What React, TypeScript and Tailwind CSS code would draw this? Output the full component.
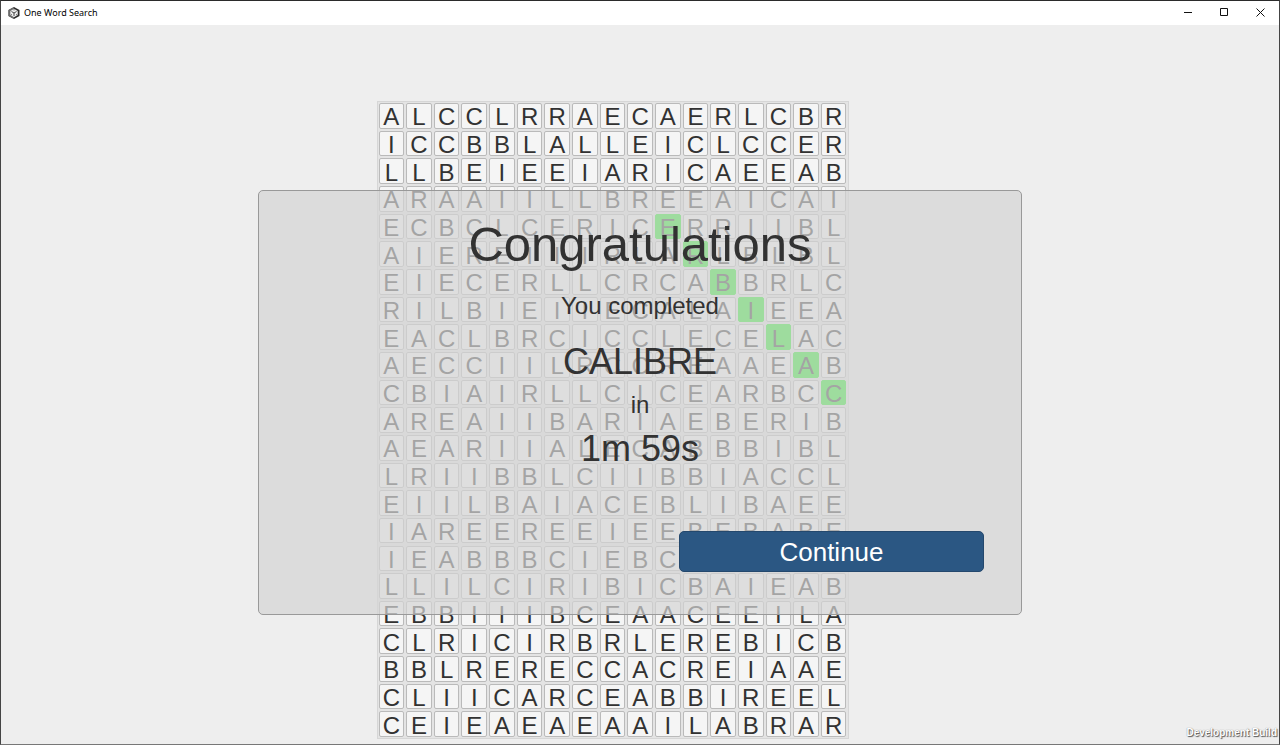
const rows: string[] = [
  "ALCCLRRAECAERLCBR",
  "ICCBBLALLEICLCCER",
  "LLBEIEEIARICAEEAB",
  "ARAAIILLBREEAICAI",
  "ECBCLCERICERRIIBL",
  "AIEREIIIRLARLBLBL",
  "EIECERLLCRCABBRLC",
  "RILBIEIIECALAIEEA",
  "EACLBRCICCLECELAC",
  "AECCIILRCCREAAEAB",
  "CBIAIRLLCICEARBCC",
  "AREAIIBARIAEBERIB",
  "AEARIIALECABBBIBL",
  "LRIIBBLCIIBBIACCL",
  "EIILBAIACEBLIBAEE",
  "IAREEREEIEEBEBABE",
  "IEABBBCIEBC      ",
  "LLILCIRIBICBAIEAB",
  "EBBIIIBCEAACEEILA",
  "CLRICIRBRLEREBICB",
  "BBLRERECCACREIAAE",
  "CLIICARCEABBIREEL",
  "CEIEAEAEAAILABRAR",
];

// The found word runs diagonally, from row 4 / column 10 to row 10 / column 16.
const isFound = (row: number, col: number) => row >= 4 && row <= 10 && col === row + 6;

function AppIcon() {
  return (
    <svg viewBox="0 0 24 24" className="size-3" aria-hidden="true">
      <path d="M12 0 23 6v12L12 24 1 18V6z" fill="#2a2a2a" />
      <path d="M1 6 12 0v3.500L4.500 8v8L12 20.500V24L1 18z" fill="#6a6a6a" />
      <path d="M12 3.500 19.500 8v8L12 20.500 4.500 16V8z" fill="#ededed" />
      <path d="M12 12v6M12 12 7 9M12 12l5-3" stroke="#333" strokeWidth="1.800" />
      <path d="M12 4v3M5.500 16 8 14.500M18.500 16 16 14.500" stroke="#555" strokeWidth="1.500" />
    </svg>
  );
}

function TitleBar() {
  return (
    <header className="flex h-6 items-center bg-white pl-[7px]">
      <AppIcon />
      <h1 className="ml-1 flex-1 font-['Noto_Sans',sans-serif] text-[9px] leading-4 font-normal text-black">
        One Word Search
      </h1>
      <button type="button" aria-label="Minimize" className="flex h-6 w-9 items-center justify-center">
        <svg viewBox="0 0 10 10" className="size-2.5" aria-hidden="true">
          <path d="M0 4.500h8" stroke="#111" />
        </svg>
      </button>
      <button type="button" aria-label="Maximize" className="flex h-6 w-9 items-center justify-center">
        <svg viewBox="0 0 10 10" className="size-2.5" aria-hidden="true">
          <path d="M.5.5h7v7h-7z" fill="none" stroke="#111" />
        </svg>
      </button>
      <button type="button" aria-label="Close" className="flex h-6 w-9 items-center justify-center">
        <svg viewBox="0 0 10 10" className="size-2.5" aria-hidden="true">
          <path d="m.5.5 8 8M8.500.5l-8 8" stroke="#111" />
        </svg>
      </button>
    </header>
  );
}

function LetterGrid() {
  return (
    <div className="grid w-full max-w-[472px] grid-cols-[repeat(17,minmax(0,1fr))] gap-0.5 border border-[#d6d6d6] bg-[#e4e4e4] p-px">
      {rows.map((row, r) =>
        row.split("").map((letter, c) => (
          <div
            key={`${r}-${c}`}
            className={`flex aspect-square min-h-0 items-center justify-center rounded-[2px] border pt-[3px] text-2xl leading-5 text-[#323232] ${
              isFound(r, c) ? "border-[#20ee20] bg-[#20ee20]" : "border-[#bababa] bg-[#f5f5f5]"
            }`}
          >
            {letter.trim()}
          </div>
        )),
      )}
    </div>
  );
}

function ResultDialog() {
  return (
    <section
      role="dialog"
      aria-labelledby="result-title"
      className="absolute inset-x-0 top-[165px] mx-auto flex w-full max-w-[764px] flex-col items-center rounded-[5px] border border-[#999] bg-[#d4d4d4]/70 px-[37px] pt-[23px] pb-[42px] text-[#323232]"
    >
      <h2 id="result-title" className="text-[49px] leading-[60px]">
        Congratulations
      </h2>
      <p className="mt-4 text-2xl leading-8">You completed</p>
      <p className="mt-4 text-4xl leading-[48px]">CALIBRE</p>
      <p className="text-2xl leading-[38px]">in</p>
      <p className="text-4xl leading-[50px]">1m 59s</p>
      <button
        type="button"
        className="mt-[57px] h-[41px] w-[305px] self-end rounded-[5px] border border-[#24486d] bg-[#2b5783] text-[26px] leading-10 text-white"
      >
        Continue
      </button>
    </section>
  );
}

export default function App() {
  return (
    <div className="flex min-h-screen flex-col border border-t-[#2b2b2b] border-r-[#444] border-b-[#777] border-l-[#444] bg-[#eee] font-['Liberation_Sans',Arial,sans-serif]">
      <TitleBar />
      <main className="relative flex flex-1 flex-col">
        <div className="flex justify-center pt-[76px] pr-[55px]">
          <LetterGrid />
        </div>
        <ResultDialog />
        <p className="absolute right-0.5 bottom-1 text-[10px] leading-[14px] font-bold text-white [text-shadow:1px_1px_1px_#555,0_0_1px_#777]">
          Development Build
        </p>
      </main>
    </div>
  );
}
